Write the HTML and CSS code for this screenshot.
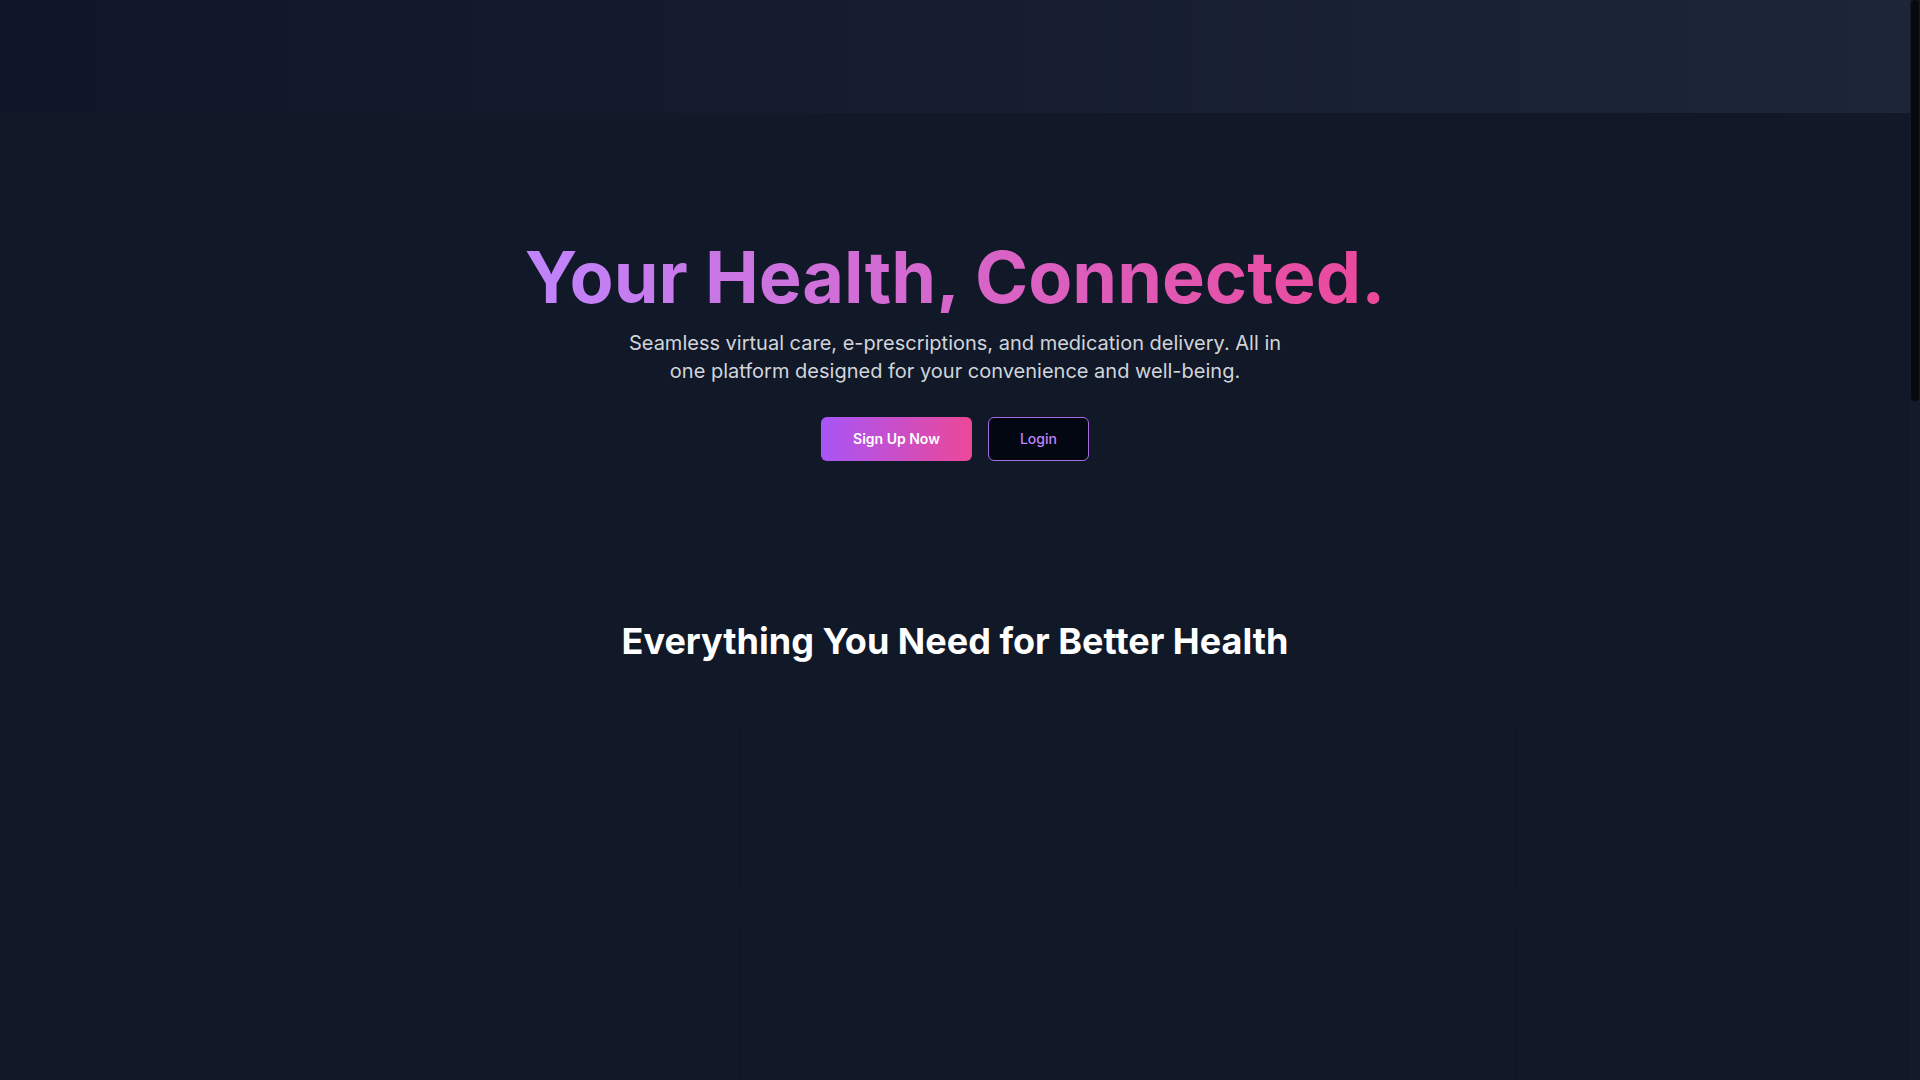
FILE: index.html
```html
<!DOCTYPE html>
<html lang="en">
<head>
<meta charset="utf-8">
<title>Your Health, Connected.</title>
<link rel="stylesheet" href="styles.css">
</head>
<body>
<div class="page">
  <header class="topbar"></header>
  <main>
    <section class="hero">
      <h1 class="hero-title"><span class="gradient-text">Your Health, Connected.</span></h1>
      <p class="hero-sub">Seamless virtual care, e-prescriptions, and medication delivery. All in one platform designed for your convenience and well-being.</p>
      <div class="hero-actions">
        <a class="btn btn-primary" href="#">Sign Up Now</a>
        <a class="btn btn-outline" href="#">Login</a>
      </div>
    </section>
    <section class="features">
      <h2 class="features-title">Everything You Need for Better Health</h2>
      <div class="card-grid">
        <div class="card"></div>
        <div class="card"></div>
        <div class="card"></div>
        <div class="card"></div>
        <div class="card"></div>
        <div class="card"></div>
      </div>
    </section>
    <section class="rest"></section>
  </main>
</div>
<div class="scrollbar"><div class="scrollbar-thumb"></div></div>
</body>
</html>
```

FILE: styles.css
```css
html { background: #111827; }
::-webkit-scrollbar { width: 0; height: 0; }

body {
  margin: 0;
  background: #111827;
  color: #ffffff;
  font-family: Inter, "Noto Sans", "Liberation Sans", sans-serif;
}

.page {
  margin-right: 10px;
}

.scrollbar {
  position: fixed;
  top: 0;
  right: 0;
  width: 10px;
  height: 100vh;
  background: #131a29;
}

.scrollbar-thumb {
  width: 8px;
  margin-left: 1px;
  height: 401px;
  border-radius: 4px;
  background: #07090f;
}

.topbar {
  height: 113px;
  background: linear-gradient(90deg, #0e1628 0%, #151d2f 50%, #1d2637 100%);
}

.hero {
  padding: 128px 16px 80px;
  text-align: center;
}

.hero-title {
  margin: 0 0 16px;
  font-size: 72px;
  line-height: 72px;
  font-weight: 700;
}

.gradient-text {
  display: inline-block;
  background: linear-gradient(90deg, #c084fc, #ec4899);
  -webkit-background-clip: text;
  background-clip: text;
  color: transparent;
}

.hero-sub {
  margin: 0 auto 32px;
  max-width: 672px;
  font-size: 20px;
  line-height: 28px;
  color: #d1d5db;
}

.hero-actions {
  display: flex;
  justify-content: center;
  gap: 16px;
}

.btn {
  box-sizing: border-box;
  display: inline-flex;
  align-items: center;
  justify-content: center;
  height: 44px;
  padding: 0 31px;
  border-radius: 6px;
  font-size: 14px;
  line-height: 20px;
  text-decoration: none;
  border: 1px solid transparent;
}

.btn-primary {
  background: linear-gradient(90deg, #a855f7, #ec4899);
  color: #ffffff;
  font-weight: 600;
}

.btn-outline {
  background: #030712;
  border-color: #a46be0;
  color: #c084fc;
  font-weight: 500;
}

.features {
  padding: 80px 16px 80px;
}

.features-title {
  margin: 0 0 56px;
  text-align: center;
  font-size: 36px;
  line-height: 40px;
  font-weight: 700;
  color: #ffffff;
}

.card-grid {
  max-width: 1116px;
  margin: 0 auto;
  display: grid;
  grid-template-columns: repeat(3, 1fr);
  column-gap: 48px;
  row-gap: 12px;
}

.card {
  height: 184px;
  border-radius: 12px;
  background: rgba(17, 24, 39, 0.6);
  border: 1px solid rgba(30, 41, 59, 0.12);
  box-shadow: 0 4px 10px rgba(0, 0, 0, 0.04);
}

.rest {
  height: 1730px;
}
```
